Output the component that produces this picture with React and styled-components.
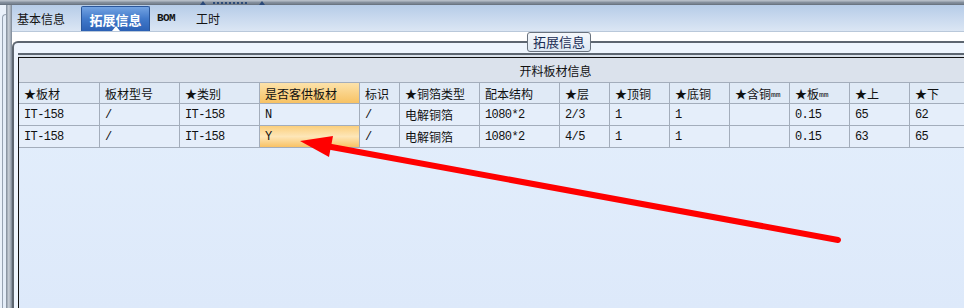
import styled, { createGlobalStyle } from 'styled-components'

const GlobalStyle = createGlobalStyle`
  html, body {
    margin: 0;
    padding: 0;
  }
  body {
    font-family: "Noto Sans CJK SC", sans-serif;
    background: #e2edfb;
  }
`

const Screen = styled.div`
  position: relative;
  width: 964px;
  height: 308px;
  overflow: hidden;
  display: flex;
  flex-direction: column;
  background: #e2edfb;
`

const TopBar = styled.div`
  height: 5px;
  flex-shrink: 0;
  display: flex;
  align-items: center;
  padding-left: 200px;
  background: linear-gradient(#b4bcc6 0, #b4bcc6 1px, #8893a1 2px, #76818e 4px, #5f6975 5px);
`

const GripTri = styled.span`
  width: 0;
  height: 0;
  border-left: 3px solid transparent;
  border-right: 3px solid transparent;
  border-bottom: 4px solid #2a4878;
  margin-right: ${({ $mr }) => $mr || 0}px;
`

const GripDots = styled.span`
  width: 35px;
  height: 2px;
  margin-right: 11px;
  background: repeating-linear-gradient(90deg, #2d4b78 0 2px, transparent 2px 4px);
`

const Body = styled.div`
  flex: 1;
  display: flex;
  min-height: 0;
`

const LeftDock = styled.div`
  width: 6px;
  flex-shrink: 0;
  background: #eaf1fa;
  display: flex;
`

const DockFrame = styled.div`
  flex: 1;
  margin: 9px 0 0 2px;
  border-left: 1px solid #97a3b2;
  border-top: 1px solid #97a3b2;
  border-top-left-radius: 4px;
  background: #e4edf8;
`

const Splitter = styled.div`
  width: 6px;
  flex-shrink: 0;
  background: linear-gradient(90deg, #7d8997, #c9d0d8 45%, #aab3be 70%, #7a8694);
`

const Main = styled.div`
  flex: 1;
  min-width: 0;
  display: flex;
  flex-direction: column;
  background: #fff;
`

const TabStrip = styled.div`
  height: 26px;
  flex-shrink: 0;
  display: flex;
  padding-left: 5px;
  border-bottom: 1px solid #b9c8da;
  background: linear-gradient(#b6cce8, #dbe6f4);
`

const Tab = styled.div`
  position: relative;
  box-sizing: border-box;
  width: ${({ $w }) => $w}px;
  margin-left: ${({ $ml }) => $ml || 0}px;
  display: flex;
  align-items: center;
  justify-content: ${({ $active }) => ($active ? 'center' : 'flex-start')};
  font-family: ${({ $mono }) => ($mono ? '"Liberation Mono", monospace' : '"Noto Sans CJK SC", sans-serif')};
  font-size: ${({ $mono }) => ($mono ? 11 : 12)}px;
  font-weight: ${({ $mono }) => ($mono ? 'bold' : 'normal')};
  letter-spacing: ${({ $mono }) => ($mono ? '-0.6px' : '0')};
  color: #141414;

  ${({ $active }) =>
    $active &&
    `
    margin-top: 1px;
    color: #fff;
    font-size: 13px;
    font-weight: bold;
    border: 1px solid #2a569a;
    border-bottom: none;
    border-radius: 2px 2px 0 0;
    background: linear-gradient(#73a3e2, #4179ca 50%, #2c61b5);
  `}
`

const Notch = styled.span`
  position: absolute;
  bottom: 0;
  left: 50%;
  transform: translateX(-50%);
  width: 0;
  height: 0;
  border-left: 4px solid transparent;
  border-right: 4px solid transparent;
  border-bottom: 5px solid #fff;
`

const Group = styled.div`
  position: relative;
  box-sizing: border-box;
  align-self: flex-start;
  width: 1092px;
  flex: 1;
  margin-top: 9px;
  padding-top: 10px;
  display: flex;
  flex-direction: column;
  background: #eef5fe;
  border-top: 2px solid #5d6671;
  border-left: 2px solid #5d6671;
  border-top-left-radius: 6px;
`

const GroupTitle = styled.div`
  position: absolute;
  top: -11px;
  left: 50%;
  transform: translateX(-50%);
  box-sizing: border-box;
  height: 20px;
  padding: 0 5px;
  line-height: 18px;
  font-size: 13px;
  color: #1a2c54;
  border: 1px solid #69727e;
  border-radius: 3px;
  background: linear-gradient(#f5f8fc, #dde7f2);
  white-space: nowrap;
`

const Frame = styled.div`
  flex: 1;
  margin-left: 4px;
  padding-top: 2px;
  display: flex;
  flex-direction: column;
  border-top: 2px solid #5d6671;
  background: #d8e0ea;
`

const Grid = styled.div`
  flex: 1;
  display: grid;
  grid-template-columns: 81px 80px 80px 100px 40px 80px 80px 50px repeat(7, 60px) 62px;
  align-content: start;
  border-top: 1px solid #111;
  border-left: 1px solid #111;
  background: linear-gradient(#e4effc, #dde9fa);
`

const GroupHead = styled.div`
  grid-column: 1 / -1;
  box-sizing: border-box;
  height: 25px;
  display: flex;
  align-items: center;
  justify-content: center;
  font-size: 12px;
  color: #111;
  border-bottom: 1px solid #a3adbb;
  background: #dbe2ec;
`

const HeadCell = styled.div`
  box-sizing: border-box;
  height: 21px;
  padding-left: 5px;
  display: flex;
  align-items: center;
  font-size: 12px;
  color: #111;
  white-space: nowrap;
  overflow: hidden;
  border-right: 1px solid #a3adbb;
  border-bottom: 1px solid #a3adbb;
  background: ${({ $hl }) => ($hl ? 'linear-gradient(#fce2aa, #f7c264)' : '#e0eaf6')};
`

const Unit = styled.span`
  font-family: "Liberation Mono", monospace;
  font-size: 8px;
  margin-top: 2px;
`

const Cell = styled.div`
  box-sizing: border-box;
  height: 22px;
  padding-left: 5px;
  display: flex;
  align-items: center;
  font-family: "Liberation Mono", "Noto Sans CJK SC", monospace;
  font-size: 12px;
  letter-spacing: -0.6px;
  color: #111;
  white-space: nowrap;
  border-right: 1px solid #a3adbb;
  border-bottom: 1px solid #a3adbb;
  background: ${({ $hl }) =>
    $hl ? 'linear-gradient(#fbcf7c, #fde6b8 50%, #f9c264)' : '#e5eefa'};
`

const CjkText = styled.span`
  font-family: "Noto Sans CJK SC", sans-serif;
  font-size: 12px;
  letter-spacing: 0;
`

const Overlay = styled.svg`
  position: absolute;
  left: 0;
  top: 0;
  pointer-events: none;
`

const headers = [
  '★板材', '板材型号', '★类别', '是否客供板材', '标识', '★铜箔类型', '配本结构',
  '★层', '★顶铜', '★底铜', ['★含铜', 'mm'], ['★板', 'mm'], '★上', '★下', '', '',
]

const rows = [
  ['IT-158', '/', 'IT-158', 'N', '/', '电解铜箔', '1080*2', '2/3', '1', '1', '', '0.15', '65', '62', '', ''],
  ['IT-158', '/', 'IT-158', 'Y', '/', '电解铜箔', '1080*2', '4/5', '1', '1', '', '0.15', '63', '65', '', ''],
]

const isCjk = (s) => /[\u4e00-\u9fff]/.test(s)

export default function App() {
  return (
    <>
      <GlobalStyle />
      <Screen>
        <TopBar>
          <GripTri $mr={7} />
          <GripDots />
          <GripTri />
        </TopBar>
        <Body>
          <LeftDock>
            <DockFrame />
          </LeftDock>
          <Splitter />
          <Main>
            <TabStrip>
              <Tab $w={64}>基本信息</Tab>
              <Tab $w={69} $active>
                拓展信息
                <Notch />
              </Tab>
              <Tab $w={39} $ml={7} $mono>BOM</Tab>
              <Tab $w={40}>工时</Tab>
            </TabStrip>
            <Group>
              <GroupTitle>拓展信息</GroupTitle>
              <Frame>
                <Grid>
                  <GroupHead>开料板材信息</GroupHead>
                  {headers.map((h, i) => (
                    <HeadCell key={i} $hl={i === 3}>
                      {Array.isArray(h) ? (
                        <>
                          {h[0]}
                          <Unit>{h[1]}</Unit>
                        </>
                      ) : (
                        h
                      )}
                    </HeadCell>
                  ))}
                  {rows.map((r, ri) =>
                    r.map((v, ci) => (
                      <Cell key={`${ri}-${ci}`} $hl={ri === 1 && ci === 3}>
                        {isCjk(v) ? <CjkText>{v}</CjkText> : v}
                      </Cell>
                    ))
                  )}
                </Grid>
              </Frame>
            </Group>
          </Main>
        </Body>
        <Overlay width="964" height="308" viewBox="0 0 964 308">
          <line x1="838" y1="240" x2="326" y2="146" stroke="#ff0000" strokeWidth="6" strokeLinecap="round" />
          <polygon points="300,141 333,136 329,157" fill="#ff0000" />
        </Overlay>
      </Screen>
    </>
  )
}
